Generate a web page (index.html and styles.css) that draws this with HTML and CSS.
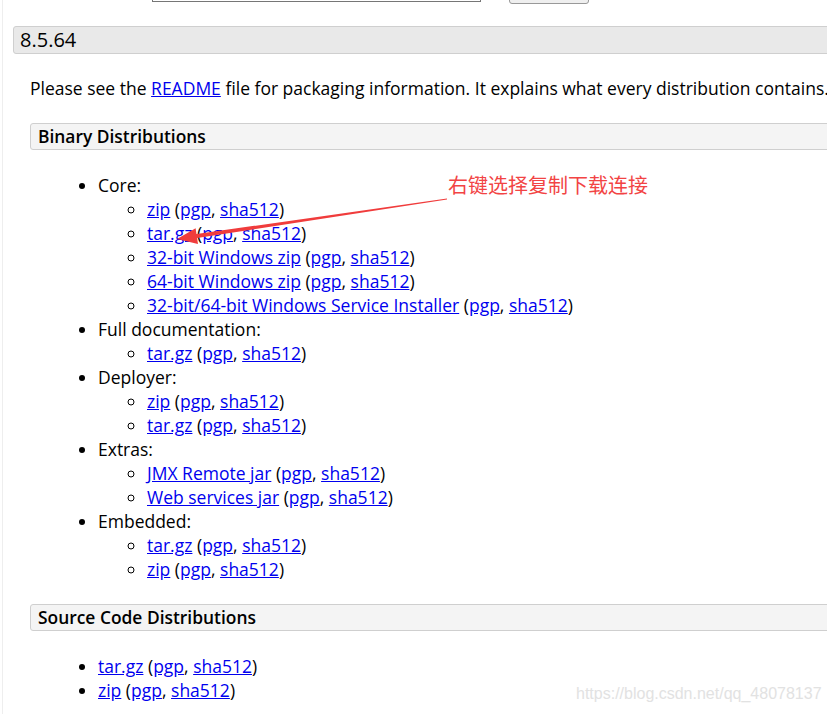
FILE: index.html
```html
<!DOCTYPE html>
<html lang="en">
<head>
<meta charset="utf-8">
<title>Tomcat 8.5.64</title>
<link rel="stylesheet" href="styles.css">
</head>
<body>
<div class="page">
  <div class="topbar">
    <div class="search-input"></div>
    <div class="search-btn"></div>
  </div>

  <h2 class="version">8.5.64</h2>

  <div class="section">
    <p class="intro">Please see the <a href="#">README</a> file for packaging information. It explains what every distribution contains.</p>

    <h3 class="subhead">Binary Distributions</h3>
    <ul class="dist">
      <li>Core:
        <ul>
          <li><a href="#">zip</a> (<a href="#">pgp</a>, <a href="#">sha512</a>)</li>
          <li><a href="#">tar.gz</a> (<a href="#">pgp</a>, <a href="#">sha512</a>)</li>
          <li><a href="#">32-bit Windows zip</a> (<a href="#">pgp</a>, <a href="#">sha512</a>)</li>
          <li><a href="#">64-bit Windows zip</a> (<a href="#">pgp</a>, <a href="#">sha512</a>)</li>
          <li><a href="#">32-bit/64-bit Windows Service Installer</a> (<a href="#">pgp</a>, <a href="#">sha512</a>)</li>
        </ul>
      </li>
      <li>Full documentation:
        <ul>
          <li><a href="#">tar.gz</a> (<a href="#">pgp</a>, <a href="#">sha512</a>)</li>
        </ul>
      </li>
      <li>Deployer:
        <ul>
          <li><a href="#">zip</a> (<a href="#">pgp</a>, <a href="#">sha512</a>)</li>
          <li><a href="#">tar.gz</a> (<a href="#">pgp</a>, <a href="#">sha512</a>)</li>
        </ul>
      </li>
      <li>Extras:
        <ul>
          <li><a href="#">JMX Remote jar</a> (<a href="#">pgp</a>, <a href="#">sha512</a>)</li>
          <li><a href="#">Web services jar</a> (<a href="#">pgp</a>, <a href="#">sha512</a>)</li>
        </ul>
      </li>
      <li>Embedded:
        <ul>
          <li><a href="#">tar.gz</a> (<a href="#">pgp</a>, <a href="#">sha512</a>)</li>
          <li><a href="#">zip</a> (<a href="#">pgp</a>, <a href="#">sha512</a>)</li>
        </ul>
      </li>
    </ul>

    <h3 class="subhead">Source Code Distributions</h3>
    <ul class="dist">
      <li><a href="#">tar.gz</a> (<a href="#">pgp</a>, <a href="#">sha512</a>)</li>
      <li><a href="#">zip</a> (<a href="#">pgp</a>, <a href="#">sha512</a>)</li>
    </ul>
  </div>
</div>

<div class="note">右键选择复制下载连接</div>
<svg class="arrow" width="827" height="714" viewBox="0 0 827 714">
  <polygon points="177,239 195.6,228.2 196.5,234.1 447,198.4 447,199.6 197.1,238.1 198,244" fill="#f03c3c"/>
</svg>
<div class="watermark">https://blog.csdn.net/qq_48078137</div>
</body>
</html>
```

FILE: styles.css
```css
html, body {
  margin: 0;
  padding: 0;
  overflow: hidden;
  background: #fff;
}
body {
  font-family: "Open Sans", "Noto Sans", sans-serif;
  color: #000;
  font-size: 17.5px;
  width: 827px;
  height: 714px;
  position: relative;
  box-sizing: border-box;
  border-left: 1px solid #eeeeee;
  margin-left: 2px;
}
.page {
  width: 1000px;
}
a {
  color: #0000ee;
  text-decoration: underline;
}
.topbar {
  height: 4px;
  display: flex;
  align-items: flex-end;
  padding-left: 149px;
  overflow: hidden;
}
.search-input {
  width: 327px;
  height: 24px;
  border: 1px solid #767676;
  margin-bottom: 2px;
  flex-shrink: 0;
  background: #fff;
}
.search-btn {
  width: 78px;
  height: 24px;
  margin-left: 28px;
  border: 1px solid #999;
  border-radius: 3px;
  background: #efefef;
  flex-shrink: 0;
}
.version {
  margin: 22px 0 0 10px;
  height: 28px;
  box-sizing: border-box;
  border: 1px solid #cfcfcf;
  border-radius: 3px;
  background: #e9e9e9;
  font-size: 20px;
  font-weight: 500;
  line-height: 26px;
  padding-left: 6px;
}
.section {
  padding-left: 27px;
}
.intro {
  margin: 22px 0 0 0;
  line-height: 24px;
  font-size: 17.5px;
}
.subhead {
  margin: 23px 0 0 0;
  height: 27px;
  box-sizing: border-box;
  border: 1px solid #cfcfcf;
  border-radius: 3px;
  background: #f4f4f4;
  font-size: 17.4px;
  font-weight: 600;
  line-height: 25px;
  padding-left: 7px;
}
.dist {
  margin: 23px 0 23px 0;
  padding-left: 68px;
  line-height: 24px;
  list-style: disc;
}
.dist ul {
  margin: 0;
  padding-left: 49px;
  list-style: circle;
}
.note {
  position: absolute;
  left: 445px;
  top: 171px;
  font-family: "Noto Sans CJK SC", "Noto Sans", sans-serif;
  font-size: 20px;
  line-height: 28px;
  color: #f24444;
  white-space: nowrap;
}
.arrow {
  position: absolute;
  left: -3px;
  top: 0;
  pointer-events: none;
}
.watermark {
  position: absolute;
  left: 573px;
  top: 685px;
  font-family: "Liberation Sans", Arial, sans-serif;
  font-size: 16px;
  color: #e2e2e2;
  white-space: nowrap;
}
```
